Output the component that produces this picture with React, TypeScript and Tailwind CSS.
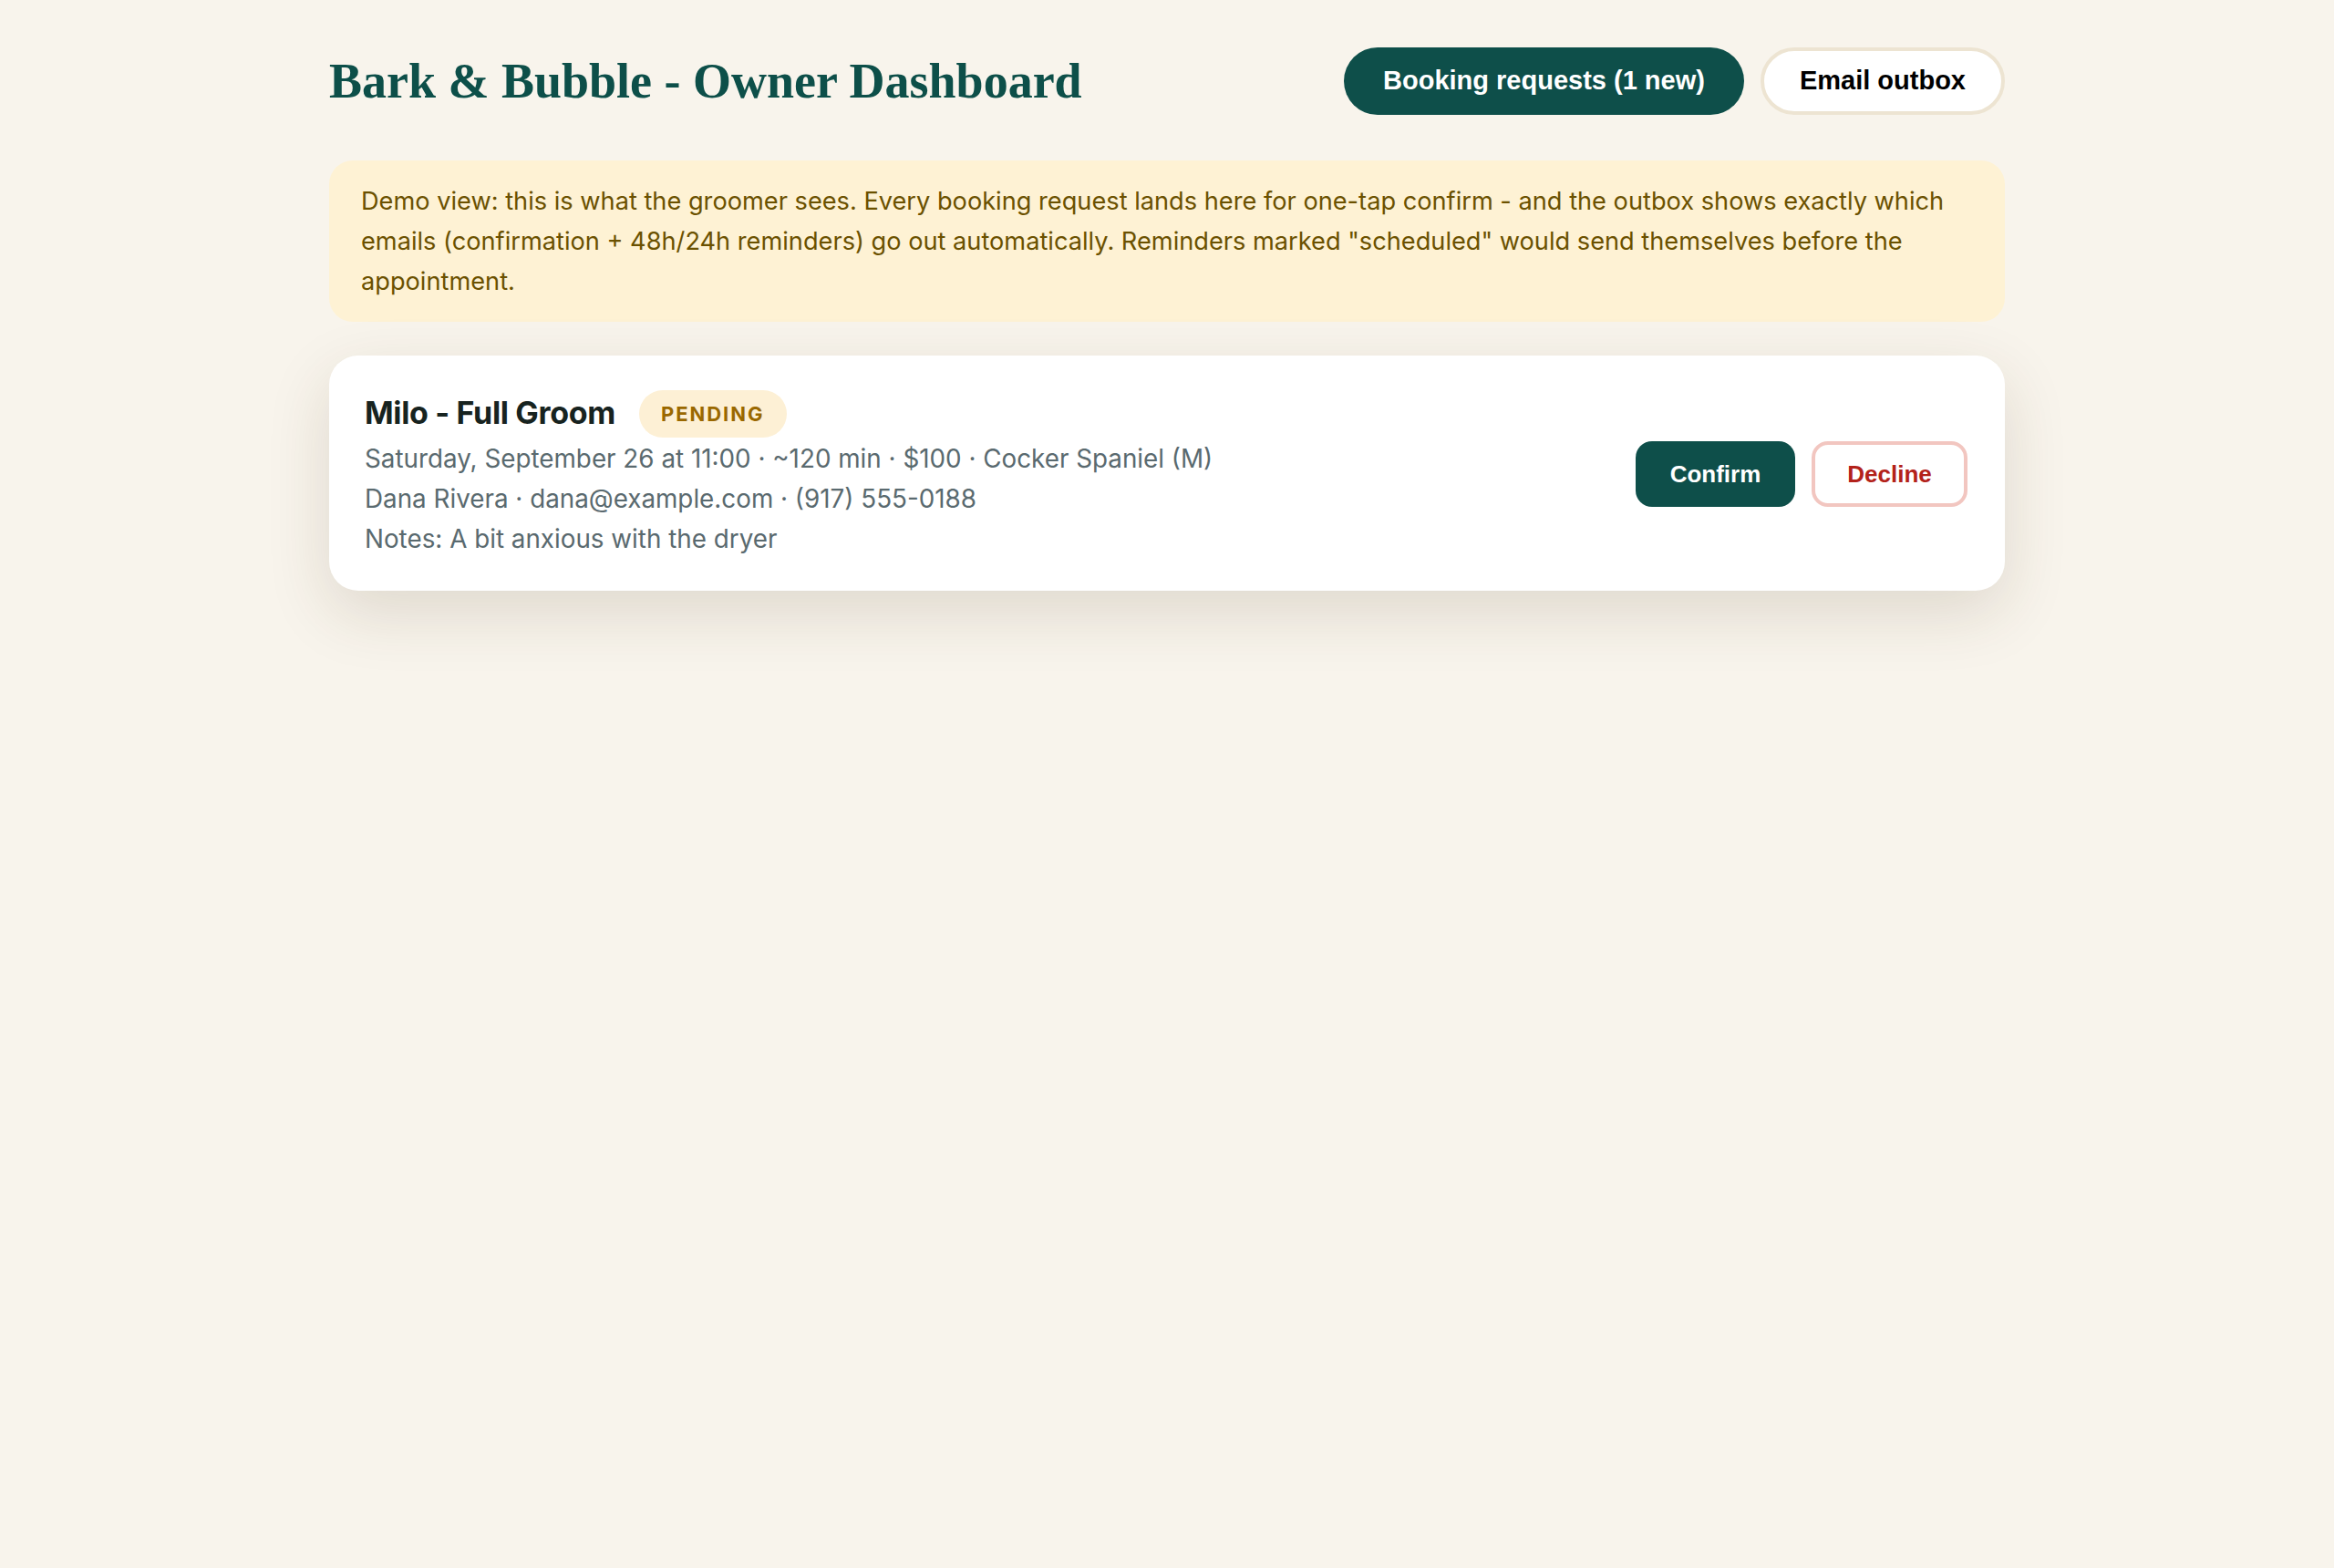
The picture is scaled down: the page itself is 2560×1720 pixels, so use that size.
export default function App() {
  return (
    <div className="min-h-screen bg-[#f8f4ec] font-['Inter',sans-serif]">
      <div className="mx-auto w-[1838px] pt-[52px]">
        {/* header */}
        <div className="flex items-center justify-between">
          <h1 className="font-['Liberation_Serif',serif] text-[54px] font-bold leading-none text-[#0d4f49]">
            Bark &amp; Bubble - Owner Dashboard
          </h1>
          <div className="flex items-center gap-[18px] font-['Liberation_Sans',Arial,sans-serif]">
            <button className="h-[74px] rounded-full bg-[#0e4f4a] px-[43px] text-[29px] font-bold text-white">
              Booking requests (1 new)
            </button>
            <button className="h-[74px] rounded-full border-[4px] border-[#ede4d2] bg-white px-[39px] text-[29px] font-bold text-black">
              Email outbox
            </button>
          </div>
        </div>

        {/* demo notice */}
        <div className="mt-[50px] rounded-[26px] bg-[#fef2d4] px-[35px] pt-[23px] pb-[22px] text-[27.2px] leading-[44px] text-[#6b5100]">
          Demo view: this is what the groomer sees. Every booking request lands here for one-tap confirm - and the outbox shows
          exactly which emails (confirmation + 48h/24h reminders) go out automatically. Reminders marked "scheduled" would send
          themselves before the appointment.
        </div>

        {/* request card */}
        <div className="mt-[37px] flex items-center justify-between rounded-[32px] bg-white pl-[39px] pr-[41px] pt-[37px] pb-[35px] shadow-[0_24px_70px_rgba(70,50,20,0.14)]">
          <div>
            <div className="flex h-[54px] items-center gap-[26px]">
              <h2 className="-mt-[3px] text-[34px] font-bold tracking-[-0.01em] text-[#172320]">Milo - Full Groom</h2>
              <span className="flex h-[52px] items-center rounded-full bg-[#fdf0d5] px-[24px] text-[22px] font-bold tracking-[0.09em] text-[#9a6800]">
                PENDING
              </span>
            </div>
            <div className="text-[27.8px] leading-[44px] text-[#5a6a6f]">
              <p>Saturday, September 26 at 11:00 · ~120 min · $100 · Cocker Spaniel (M)</p>
              <p>Dana Rivera · dana@example.com · (917) 555-0188</p>
              <p>Notes: A bit anxious with the dryer</p>
            </div>
          </div>
          <div className="flex items-center gap-[18px] font-['Liberation_Sans',Arial,sans-serif]">
            <button className="h-[72px] w-[175px] rounded-[18px] bg-[#0e4f4a] text-[26px] font-bold text-white">Confirm</button>
            <button className="h-[72px] w-[171px] rounded-[18px] border-[4px] border-[#f2c6c0] bg-white text-[26px] font-bold text-[#b3221a]">
              Decline
            </button>
          </div>
        </div>
      </div>
    </div>
  )
}
